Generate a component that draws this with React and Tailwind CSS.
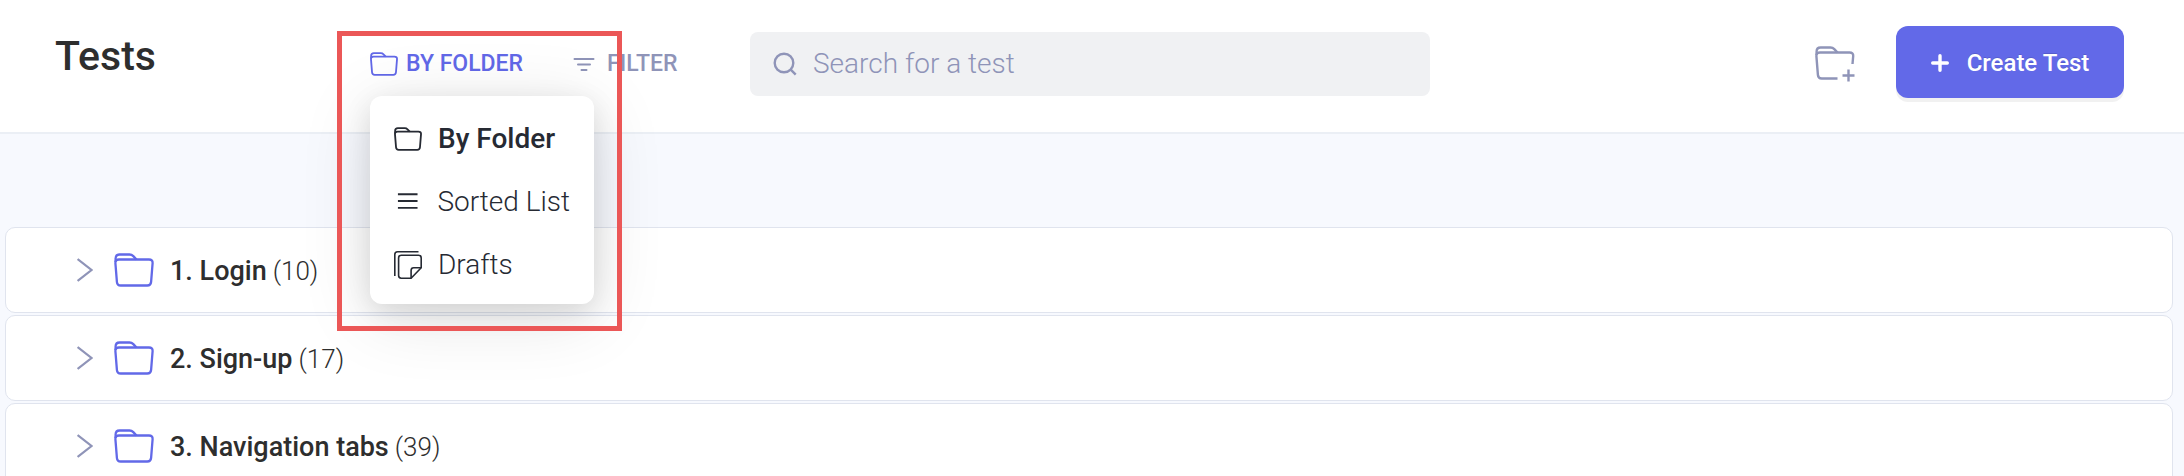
import React from 'react';

const FolderIcon = ({ className, strokeWidth = 2.3 }) => (
  <svg viewBox="0 0 40 34" fill="none" stroke="currentColor" strokeWidth={strokeWidth} strokeLinejoin="round" className={className} aria-hidden="true">
    <path d="M5 6.5h30c2.400 0 3.800 1.200 3.600 3.600l-1.500 18.700c-.2 2.400-1.400 3.700-3.800 3.700H6.700c-2.400 0-3.600-1.300-3.800-3.700L1.400 10.100C1.200 7.700 2.600 6.500 5 6.500z" />
    <path d="M1.600 9V5.500c0-2.700 1.400-4 4-4h9.900c1.700 0 2.700.5 3.800 1.600l3.200 3.400" />
  </svg>
);

const FolderPlusIcon = ({ className }) => (
  <svg viewBox="0 0 40 36" fill="none" stroke="currentColor" strokeWidth="2.4" className={className} aria-hidden="true">
    <path d="M37.500 18l.7-8c.2-2.400-1.200-3.500-3.600-3.500H5c-2.400 0-3.800 1.200-3.600 3.600l1.500 18.700c.2 2.400 1.400 3.700 3.800 3.700h15.800" />
    <path d="M1.600 9V5.500c0-2.700 1.400-4 4-4h9.900c1.700 0 2.700.5 3.800 1.600l3.200 3.400" />
    <path d="M33.500 23.500v12M27.500 29.500h12" />
  </svg>
);

const FilterIcon = ({ className }) => (
  <svg viewBox="0 0 22 14" fill="none" stroke="currentColor" strokeWidth="2" strokeLinecap="round" className={className} aria-hidden="true">
    <path d="M1.500 2h19M5 7.500h12M8.500 13h5" />
  </svg>
);

const ListIcon = ({ className }) => (
  <svg viewBox="0 0 28 28" fill="none" stroke="currentColor" strokeWidth="2" className={className} aria-hidden="true">
    <path d="M4 6h20M4 13h20M4 20h20" />
  </svg>
);

const DraftsIcon = ({ className }) => (
  <svg viewBox="0 0 28 28" fill="none" stroke="currentColor" strokeWidth="1.6" strokeLinejoin="round" className={className} aria-hidden="true">
    <path d="M.8 25V3.600C.8 1.800 1.800.8 3.600.8H24.500" />
    <path d="M7.200 4.300h17.400c1.700 0 2.600.9 2.600 2.600v9.900L17.100 27.200H7.200c-1.700 0-2.600-.9-2.600-2.600V6.900c0-1.700.9-2.600 2.600-2.600z" />
    <path d="M17.100 27.200v-7.800c0-1.700.9-2.600 2.600-2.600h7.500" />
  </svg>
);

const SearchIcon = ({ className }) => (
  <svg viewBox="0 0 24 24" fill="none" stroke="currentColor" strokeWidth="2.4" className={className} aria-hidden="true">
    <circle cx="11" cy="11" r="9.300" />
    <path d="M17.200 17.200l5.500 5.500" />
  </svg>
);

const PlusIcon = ({ className }) => (
  <svg viewBox="0 0 18 18" fill="none" stroke="currentColor" strokeWidth="3.4" strokeLinecap="round" className={className} aria-hidden="true">
    <path d="M9 1.700v14.600M1.700 9h14.600" />
  </svg>
);

const ChevronIcon = ({ className }) => (
  <svg viewBox="0 0 16 24" fill="none" stroke="currentColor" strokeWidth="2.2" className={className} aria-hidden="true">
    <path d="M.6 1L14.500 12 .6 23" />
  </svg>
);

const views = [
  { label: 'By Folder', icon: <FolderIcon className="w-7 h-6" strokeWidth={2.6} />, active: true },
  { label: 'Sorted List', icon: <ListIcon className="w-7 h-7" /> },
  { label: 'Drafts', icon: <DraftsIcon className="w-7 h-7" /> },
];

const folders = [
  { name: '1. Login', count: 10 },
  { name: '2. Sign-up', count: 17 },
  { name: '3. Navigation tabs', count: 39 },
];

const ViewMenu = () => (
  <div className="relative">
    <button type="button" aria-haspopup="menu" aria-expanded="true" className="flex items-center gap-2 text-[23px] leading-8 font-medium text-[#6268e8]">
      <FolderIcon className="w-7 h-6" strokeWidth={2.6} />
      BY FOLDER
    </button>

    <div role="menu" className="absolute left-0 top-12 w-56 rounded-xl bg-white pt-[11px] pb-2 shadow-[0_12px_72px_rgba(0,0,0,0.12),0_8px_28px_rgba(0,0,0,0.11)]">
      {views.map((view) => (
        <button
          key={view.label}
          type="button"
          role="menuitem"
          className={`flex w-full items-center gap-4 whitespace-nowrap px-6 py-4 text-[28px] leading-[31px] text-[#262a33] ${view.active ? 'font-medium' : 'font-light'}`}
        >
          {view.icon}
          {view.label}
        </button>
      ))}
    </div>

    {/* Highlight frame */}
    <div className="pointer-events-none absolute -left-[33px] -top-[17px] h-[300px] w-[285px] border-5 border-[#eb5757]" />
  </div>
);

const Header = () => (
  <header className="relative z-10 flex items-center border-b-2 border-[#ebeff5] bg-white pt-[26px] pb-[30px] pl-[55px] pr-[60px]">
    <h1 className="w-[315px] shrink-0 pb-4 text-[41px] leading-[48px] font-medium text-[#2e2e2e]">Tests</h1>

    <div className="flex w-[380px] shrink-0 items-center gap-[50px]">
      <ViewMenu />
      <button type="button" className="flex items-center gap-3 text-[23px] leading-8 font-medium text-[#8f94b8]">
        <FilterIcon className="w-[22px] h-[14px]" />
        FILTER
      </button>
    </div>

    <label className="flex h-16 w-[680px] items-center gap-4 rounded-lg bg-[#f0f1f3] px-[23px] text-[#8f94b8]">
      <SearchIcon className="w-6 h-6 shrink-0" />
      <input
        type="search"
        aria-label="Search for a test"
        placeholder="Search for a test"
        className="w-full bg-transparent text-[28px] font-light outline-none placeholder:text-[#8f94b8]"
      />
    </label>

    <div className="ml-auto flex shrink-0 items-center gap-[41px]">
      <button type="button" aria-label="New folder" className="text-[#8f94b8]">
        <FolderPlusIcon className="w-10 h-9" />
      </button>
      <div className="pb-1">
        <button type="button" className="flex h-[72px] w-[228px] items-center justify-center gap-[18px] rounded-xl bg-[#6269e8] pt-[2px] text-2xl font-medium text-white shadow-[0_4px_0_#f1f1f1] [text-shadow:0_-1px_0_rgba(0,0,0,0.12)]">
          <PlusIcon className="w-[18px] h-[18px]" />
          Create Test
        </button>
      </div>
    </div>
  </header>
);

const FolderRow = ({ name, count }) => (
  <li className="flex h-[86px] items-center rounded-[10px] border border-[#e0e4ee] bg-white pl-[71px]">
    <button type="button" aria-label={`Expand ${name}`} className="text-[#8f94b8]">
      <ChevronIcon className="w-4 h-6" />
    </button>
    <FolderIcon className="ml-[21px] mr-4 h-[34px] w-10 text-[#6269e8]" />
    <span className="flex items-center gap-[6px] pt-[3px] text-[27px] text-[#2e2e2e]">
      <span className="font-medium">{name}</span>
      <span className="text-[26px] font-light">({count})</span>
    </span>
  </li>
);

export default function App() {
  return (
    <div className="h-screen overflow-hidden bg-[#f7f9fe] font-[Roboto,sans-serif]">
      <Header />
      <main className="pt-[93px] pl-[5px] pr-[11px]">
        <ul className="flex flex-col gap-[2px]">
          {folders.map((folder) => (
            <FolderRow key={folder.name} {...folder} />
          ))}
        </ul>
      </main>
    </div>
  );
}
